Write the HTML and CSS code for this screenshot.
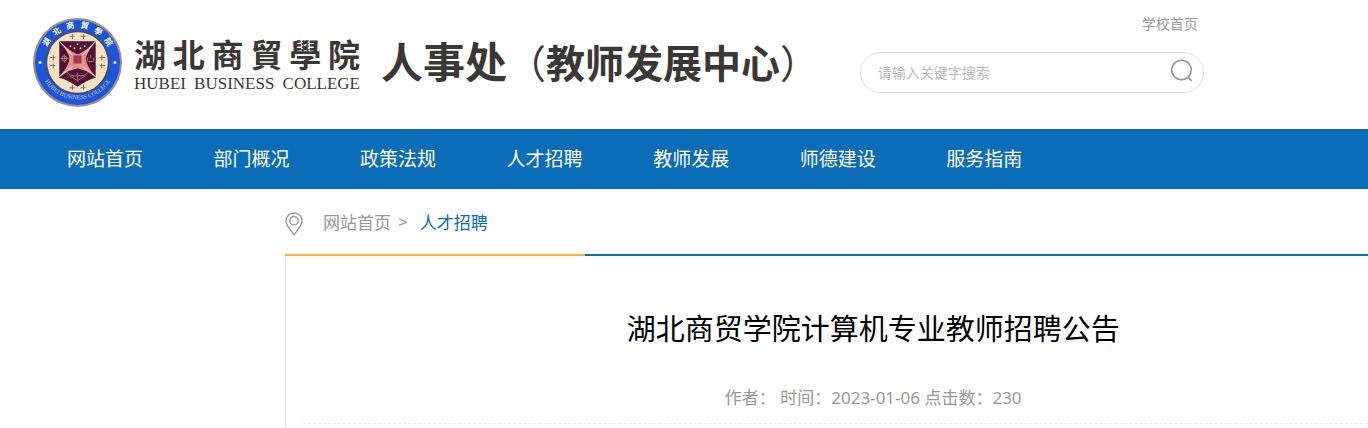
FILE: index.html
```html
<!DOCTYPE html>
<html lang="zh-CN">

<head>
    <meta charset="utf-8">
    <title>湖北商贸学院计算机专业教师招聘公告</title>
    <link rel="stylesheet" href="styles.css">
</head>

<body>

<header class="header">
    <a class="brand" href="#">
        <svg class="emblem" viewBox="-45 -45 90 90" aria-hidden="true">
            <defs>
                <path id="arc-top" d="M-32 9 A33.5 33.5 0 1 1 32 9"/>
                <path id="arc-bottom" d="M-38 4 A38.5 38.5 0 0 0 38 4"/>
            </defs>
            <circle r="44" fill="#9b8d91"/>
            <circle r="42" fill="#1d55d8"/>
            <circle r="32" fill="#454b78"/>
            <circle r="30" fill="#f5e2c5"/>
            <text class="ring-cn"><textPath href="#arc-top" startOffset="50%" text-anchor="middle">湖&#160;&#160;&#160;北&#160;&#160;&#160;商&#160;&#160;&#160;貿&#160;&#160;&#160;學&#160;&#160;&#160;院</textPath></text>
            <text class="ring-en"><textPath href="#arc-bottom" startOffset="50%" text-anchor="middle">HUBEI BUSINESS COLLEGE</textPath></text>
            <circle cx="-37" cy="0" r="1.5" fill="#f5e2c5"/>
            <circle cx="37" cy="0" r="1.5" fill="#f5e2c5"/>
            <path d="M-18 -21 H18 V15 Q10 17 0 24 Q-10 17 -18 15 Z" fill="#521035"/>
            <path d="M-18 -21 Q-6 -10 0 -8 Q7 -10 18 -21 Q9 -9 8 -4 Q9 4 18 14 Q8 7 0 6 Q-8 7 -18 14 Q-8 3 -8 -4 Q-8 -9 -18 -21 Z" fill="#ee8f8c"/>
            <path d="M-18 -21 L-5 -7 M18 -21 L5 -7 M-18 14 L-5 4 M18 14 L5 4" stroke="#f8ddc8" stroke-width="1"/>
            <rect x="-4" y="-7" width="8" height="8" fill="#a8384c"/>
            <g fill="#f0d3c6">
                <circle cx="-7" cy="-16" r="1"/>
                <circle cx="-3" cy="-14" r="1"/>
                <circle cx="0" cy="-18" r="1"/>
                <circle cx="3" cy="-14" r="1"/>
                <circle cx="7" cy="-16" r="1"/>
            </g>
            <g fill="none" stroke="#b5808c" stroke-width=".8">
                <circle cx="-13" cy="-4" r="2.5"/>
                <path d="M-13 -8 V0 M-17 -4 H-9"/>
                <path d="M13 -8 V-4 M10 -5 V-1 H16 V-5"/>
                <path d="M-11 9 Q-8 14 0 13 Q8 14 11 9 M-8 13 L0 18 L8 13 M0 10 V18"/>
            </g>
            <g stroke="#886d60" stroke-width="1">
                <path d="M-8 -26 H-3 M-5 -28 V-23 M3 -26 H8 M6 -28 V-23"/>
                <path d="M-27 -5 H-22 M-24 -7 V-2 M-27 3 H-22 M-24 1 V6"/>
                <path d="M22 -5 H27 M24 -7 V-2 M22 3 H27 M24 1 V6"/>
                <path d="M-8 25 H-3 M-5 22 V27 M3 25 H8 M6 22 V27"/>
            </g>
        </svg>
        <span class="college">
            <span class="college-cn"><span>湖</span><span>北</span><span>商</span><span>貿</span><span>學</span><span>院</span></span>
            <span class="college-en"><span>HUBEI</span> <span>BUSINESS</span> <span>COLLEGE</span></span>
        </span>
        <span class="dept">人事处<span class="dept-sub"><span class="paren">（</span>教师发展中心<span class="paren">）</span></span></span>
    </a>
    <div class="tools">
        <a class="school-link" href="#">学校首页</a>
        <form class="search">
            <input type="text" placeholder="请输入关键字搜索" aria-label="请输入关键字搜索">
            <button type="button" aria-label="搜索">
                <svg viewBox="0 0 24 24" fill="none" stroke="#96969c" stroke-width="1.6">
                    <circle cx="12.5" cy="11" r="9.8"/>
                    <path d="M19 18 L22.5 22"/>
                </svg>
            </button>
        </form>
    </div>
</header>

<nav class="nav">
    <ul>
        <li><a href="#">网站首页</a></li>
        <li><a href="#">部门概况</a></li>
        <li><a href="#">政策法规</a></li>
        <li><a href="#">人才招聘</a></li>
        <li><a href="#">教师发展</a></li>
        <li><a href="#">师德建设</a></li>
        <li><a href="#">服务指南</a></li>
    </ul>
</nav>

<main class="content">
    <div class="crumbs">
        <svg class="pin" viewBox="0 0 18 24" fill="none" stroke="#9a9a9a" stroke-width="1.4">
            <path d="M9 23 C6 18 1 14 1 9 A8 8 0 0 1 17 9 C17 14 12 18 9 23 Z"/>
            <circle cx="9" cy="8.7" r="4.2"/>
        </svg>
        <a href="#">网站首页</a>
        <span class="sep">&gt;</span>
        <a class="current" href="#">人才招聘</a>
    </div>
    <div class="bar"></div>
    <article class="article">
        <h1>湖北商贸学院计算机专业教师招聘公告</h1>
        <p class="info">作者： 时间：2023-01-06 点击数：230</p>
    </article>
</main>

</body>

</html>
```

FILE: styles.css
```css
* {
    margin: 0;
    padding: 0;
    box-sizing: border-box;
}
body {
    font-family: "Noto Sans", "Noto Sans CJK SC", sans-serif;
    font-size: 17px;
    color: #999;
    background: #fff;
    overflow: hidden;
}
a {
    color: inherit;
    text-decoration: none;
}
ul {
    list-style: none;
}

/* header */
.header {
    display: flex;
    justify-content: space-between;
    height: 129px;
    padding: 0 12% 0 32px;
}
.brand {
    display: flex;
    align-items: center;
    padding-bottom: 5px;
    color: #3c3734;
    white-space: nowrap;
}
.emblem {
    width: 91px;
    height: 91px;
}
.ring-cn {
    font-family: "Noto Sans CJK TC", sans-serif;
    font-size: 8px;
    font-weight: bold;
    fill: #fff;
}
.ring-en {
    font-family: "Liberation Serif", serif;
    font-size: 6px;
    fill: #c9d8ff;
}
.college {
    display: flex;
    flex-direction: column;
    width: 226px;
    margin-left: 11px;
    padding-top: 6px;
}
.college-cn,
.college-en {
    display: flex;
    justify-content: space-between;
}
.college-cn {
    font-family: "Noto Sans CJK TC", sans-serif;
    font-size: 32px;
    font-weight: bold;
    line-height: 38px;
}
.college-en {
    font-family: "Liberation Serif", serif;
    font-size: 17px;
    line-height: 24px;
}
.dept {
    margin-left: 21px;
    padding-bottom: 4px;
    font-family: "Noto Sans CJK SC", sans-serif;
    font-size: 42px;
    font-weight: bold;
    line-height: 60px;
}
.dept-sub {
    font-size: 39px;
}
.paren {
    font-weight: normal;
}
.tools {
    width: 344px;
    padding-top: 14px;
}
.school-link {
    display: block;
    padding-right: 6px;
    font-size: 14px;
    line-height: 20px;
    text-align: right;
}
.search {
    display: flex;
    align-items: center;
    height: 41px;
    margin-top: 18px;
    padding: 0 10px 0 17px;
    border: 1px solid #ddd;
    border-radius: 21px;
}
.search input {
    flex: 1;
    min-width: 0;
    border: 0;
    outline: 0;
    font-family: inherit;
    font-size: 14px;
    background: none;
}
.search input::placeholder {
    color: #bbb;
}
.search button {
    width: 24px;
    height: 24px;
    margin-bottom: 4px;
    border: 0;
    background: none;
}
.search svg {
    display: block;
}

/* main menu */
.nav {
    padding-left: 67px;
    background: #0b6cb8;
}
.nav ul {
    display: grid;
    grid-template-columns: repeat(7, 1fr);
    width: 79%;
    padding-right: 2px;
}
.nav a {
    font-size: 19px;
    line-height: 60px;
    color: #fff;
}

/* article */
.content {
    width: 86%;
    margin-left: 285px;
}
.crumbs {
    display: flex;
    align-items: center;
    height: 65px;
}
.pin {
    width: 18px;
    height: 24px;
    margin: 4px 20px 0 0;
}
.sep {
    margin: 0 12px 0 7px;
}
.current {
    color: #0b6cb8;
}
.bar {
    height: 2px;
    background: linear-gradient(to right, #fbb040 300px, #0b6cb8 300px);
}
.article {
    padding: 48px 17px 4px;
    border: solid #eaeaea;
    border-width: 0 1px;
    text-align: center;
}
.article h1 {
    font-size: 29px;
    font-weight: normal;
    line-height: 50px;
    color: #000;
}
.info {
    margin-top: 28px;
    padding-bottom: 10px;
    line-height: 31px;
    border-bottom: 1px dashed #eaeaea;
}
```
